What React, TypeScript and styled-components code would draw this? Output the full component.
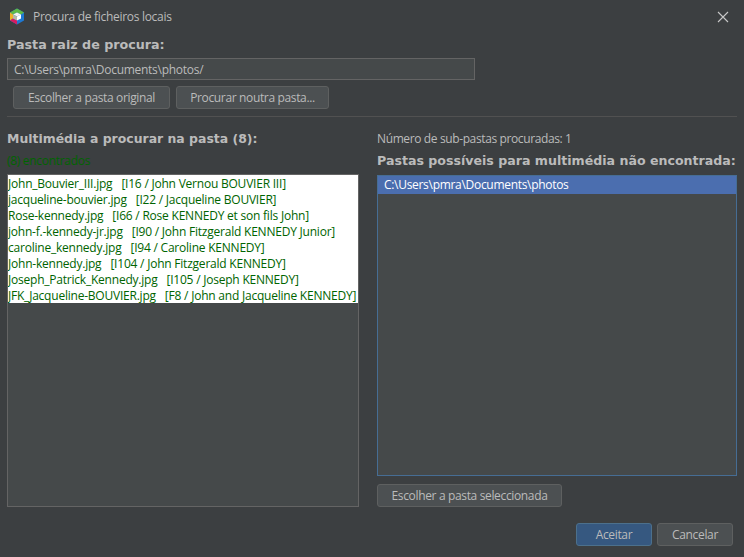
import React from 'react'
import styled, { createGlobalStyle } from 'styled-components'

const GlobalStyle = createGlobalStyle`
    html, body {
        margin: 0;
        padding: 0;
        background: #3c3f41;
    }
`

const UI_FONT = `'Open Sans', 'Noto Sans', sans-serif`

const Dialog = styled.div`
    width: 744px;
    height: 557px;
    box-sizing: border-box;
    background: #3c3f41;
    display: flex;
    flex-direction: column;
    font-family: ${UI_FONT};
    font-size: 12px;
    color: #bbbbbb;
    overflow: hidden;
`

const TitleBar = styled.div`
    height: 33px;
    flex: none;
    display: flex;
    align-items: center;
    padding: 0 15px 0 9px;
    gap: 8px;
`

const WindowTitle = styled.div`
    flex: 1;
    font-size: 12px;
    letter-spacing: -0.3px;
    color: #bbbbbb;
`

const Heading = styled.div<{ $top?: number; $size?: number }>`
    font-family: 'DejaVu Sans', sans-serif;
    font-weight: 700;
    font-size: ${(p) => p.$size ?? 12.6}px;
    line-height: 16px;
    margin-top: ${(p) => p.$top ?? 0}px;
    white-space: nowrap;
    color: #bbbbbb;
`

const RootSection = styled.div`
    flex: none;
    padding: 4px 7px 0;
    display: flex;
    flex-direction: column;
`

const PathInput = styled.div`
    width: 468px;
    height: 22px;
    margin-top: 5px;
    box-sizing: border-box;
    border: 1px solid #646464;
    background: #45494a;
    padding: 0 6px;
    line-height: 21px;
    letter-spacing: -0.28px;
`

const ButtonRow = styled.div`
    display: flex;
    gap: 6px;
    margin: 6px 0 7px 6px;
`

const Button = styled.div<{ $width: number; $primary?: boolean }>`
    width: ${(p) => p.$width}px;
    height: 23px;
    box-sizing: border-box;
    flex: none;
    display: flex;
    align-items: center;
    justify-content: center;
    border-radius: 3px;
    border: 1px solid ${(p) => (p.$primary ? '#4c708c' : '#5e6060')};
    background: ${(p) => (p.$primary ? '#365880' : '#4c5052')};
    color: #bbbbbb;
    letter-spacing: -0.35px;
`

const Separator = styled.div`
    height: 1px;
    background: #515151;
`

const Columns = styled.div`
    flex: 1;
    min-height: 0;
    display: grid;
    grid-template-columns: 352px 360px;
    column-gap: 18px;
    padding: 14px 7px 0;
`

const Column = styled.div`
    display: flex;
    flex-direction: column;
    min-height: 0;
`

const FoundLabel = styled.div`
    color: #006400;
    line-height: 16px;
    margin-top: 6px;
    letter-spacing: -0.3px;
`

const CountLabel = styled.div`
    line-height: 16px;
    letter-spacing: -0.38px;
`

const ListBox = styled.div<{ $active?: boolean; $gap: number }>`
    flex: 1;
    min-height: 0;
    margin-top: ${(p) => p.$gap}px;
    box-sizing: border-box;
    border: 1px solid ${(p) => (p.$active ? '#466d94' : '#646464')};
    background: #45494a;
`

const FileRow = styled.div`
    height: 16px;
    line-height: 18px;
    background: #ffffff;
    color: #006400;
    white-space: nowrap;
    letter-spacing: -0.22px;
    overflow: hidden;
`

const FileRef = styled.span`
    margin-left: 9px;
`

const FolderRow = styled.div`
    height: 18px;
    line-height: 18px;
    background: #4b6eaf;
    color: #ffffff;
    padding-left: 6px;
    letter-spacing: -0.3px;
`

const ColumnAction = styled.div`
    margin-top: 8px;
    flex: none;
`

const Footer = styled.div`
    flex: none;
    display: flex;
    justify-content: flex-end;
    gap: 5px;
    padding: 16px 11px 11px 0;
`

const files = [
    ['John_Bouvier_III.jpg', '[I16 / John Vernou BOUVIER III]'],
    ['jacqueline-bouvier.jpg', '[I22 / Jacqueline BOUVIER]'],
    ['Rose-kennedy.jpg', '[I66 / Rose KENNEDY et son fils John]'],
    ['john-f.-kennedy-jr.jpg', '[I90 / John Fitzgerald KENNEDY Junior]'],
    ['caroline_kennedy.jpg', '[I94 / Caroline KENNEDY]'],
    ['John-kennedy.jpg', '[I104 / John Fitzgerald KENNEDY]'],
    ['Joseph_Patrick_Kennedy.jpg', '[I105 / Joseph KENNEDY]'],
    ['JFK_Jacqueline-BOUVIER.jpg', '[F8 / John and Jacqueline KENNEDY]'],
]

const AppLogo = () => (
    <svg width="16" height="17" viewBox="0 0 16 17">
        <polygon points="8,0.5 15,4.5 15,12.5 8,16.5 1,12.5 1,4.5" fill="#1e78d2" />
        <polygon points="8,0.5 15,4.5 12,6.5 8,4.5 4,6.5 1,4.5" fill="#5fb946" />
        <polygon points="1,4.5 4,6.5 4,10.5 1,12.5" fill="#f0b429" />
        <polygon points="1,12.5 4,10.5 8,12.5 8,16.5" fill="#d81b60" />
        <polygon points="4,6.5 8,4.5 12,6.5 8,8.5" fill="#f4f4ec" />
        <polygon points="4,6.5 8,8.5 8,12.5 4,10.5" fill="#b9b9a8" />
        <polygon points="12,6.5 8,8.5 8,12.5 12,10.5" fill="#ffffff" />
    </svg>
)

const CloseIcon = () => (
    <svg width="12" height="12" viewBox="0 0 12 12">
        <path d="M1 1L11 11M11 1L1 11" stroke="#c8c8c8" strokeWidth="1.1" fill="none" />
    </svg>
)

export default function App() {
    return (
        <Dialog>
            <GlobalStyle />
            <TitleBar>
                <AppLogo />
                <WindowTitle>Procura de ficheiros locais</WindowTitle>
                <CloseIcon />
            </TitleBar>
            <RootSection>
                <Heading $size={12.7}>Pasta raiz de procura:</Heading>
                <PathInput>C:\Users\pmra\Documents\photos/</PathInput>
                <ButtonRow>
                    <Button $width={157}>Escolher a pasta original</Button>
                    <Button $width={153}>Procurar noutra pasta...</Button>
                </ButtonRow>
                <Separator />
            </RootSection>
            <Columns>
                <Column>
                    <Heading $size={12.45}>Multimédia a procurar na pasta (8):</Heading>
                    <FoundLabel>(8) encontrados</FoundLabel>
                    <ListBox $gap={5}>
                        {files.map(([name, ref]) => (
                            <FileRow key={name}>
                                {name}
                                <FileRef>{ref}</FileRef>
                            </FileRow>
                        ))}
                    </ListBox>
                </Column>
                <Column>
                    <CountLabel>Número de sub-pastas procuradas: 1</CountLabel>
                    <Heading $top={6}>Pastas possíveis para multimédia não encontrada:</Heading>
                    <ListBox $active $gap={6}>
                        <FolderRow>C:\Users\pmra\Documents\photos</FolderRow>
                    </ListBox>
                    <ColumnAction>
                        <Button $width={185}>Escolher a pasta seleccionada</Button>
                    </ColumnAction>
                </Column>
            </Columns>
            <Footer>
                <Button $width={76} $primary>
                    Aceitar
                </Button>
                <Button $width={76}>Cancelar</Button>
            </Footer>
        </Dialog>
    )
}
